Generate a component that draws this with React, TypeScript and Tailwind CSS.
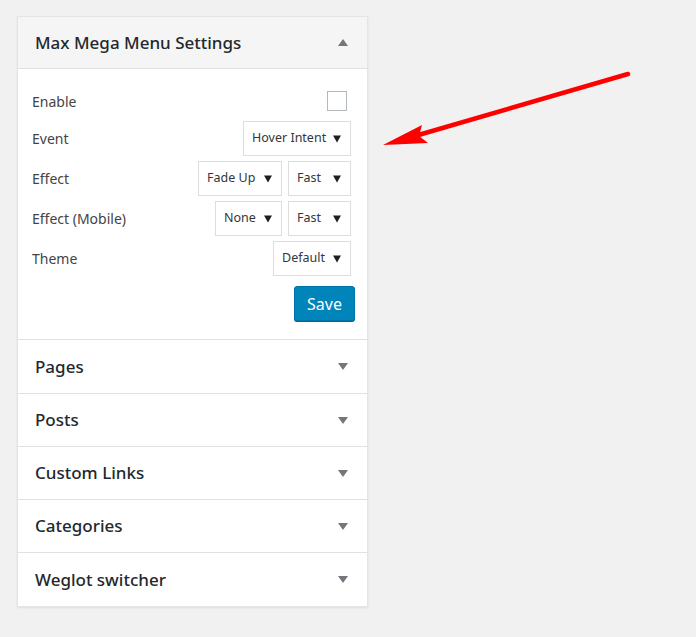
import React from "react";

const SECTIONS = ["Pages", "Posts", "Custom Links", "Categories", "Weglot switcher"];

function Caret({ up }: { up?: boolean }) {
  return (
    <svg width="10" height="7" viewBox="0 0 10 7" className="shrink-0">
      {up ? <polygon points="0,7 10,7 5,0" fill="#72777c" /> : <polygon points="0,0 10,0 5,7" fill="#72777c" />}
    </svg>
  );
}

function Select({ value, w }: { value: string; w: string }) {
  return (
    <div className={`h-[35px] ${w} shrink-0 flex items-center justify-between pl-[8px] pr-[9px] bg-white border border-[#dddddd] text-[12.5px] text-[#32373c] whitespace-nowrap`}>
      <span>{value}</span>
      <svg width="8" height="8" viewBox="0 0 8 8" className="ml-[4px] shrink-0">
        <polygon points="0,0.5 8,0.5 4,7.5" fill="#1e1e1e" />
      </svg>
    </div>
  );
}

function Row({ label, children, h = "h-[35px]" }: { label: string; children: React.ReactNode; h?: string }) {
  return (
    <div className={`flex items-center justify-between ${h}`}>
      <span className="text-[14px] text-[#444444]">{label}</span>
      <div className="flex items-center gap-[6px]">{children}</div>
    </div>
  );
}

export default function App() {
  return (
    <div className="relative min-h-[637px] w-[696px] bg-[#f1f1f1] pt-[16px] pl-[17px]" style={{ fontFamily: '"Noto Sans", "Open Sans", sans-serif' }}>
      <div className="w-[351px] bg-white border border-[#e5e5e5] shadow-[0_1px_2px_rgba(0,0,0,0.08)]">
        <div className="h-[52px] flex items-center justify-between pl-[17px] pr-[19px] bg-[#f5f5f5] border-b border-[#e1e1e1]">
          <span className="text-[17px] font-medium text-[#23282d]">Max Mega Menu Settings</span>
          <Caret up />
        </div>
        <div className="pt-[17px] pb-[18px] pl-[14px] pr-[16px] flex flex-col gap-[5px]">
          <Row label="Enable" h="h-[30px]">
            <div className="w-[20px] h-[20px] mr-[4px] border border-[#b4b9be] bg-white" />
          </Row>
          <Row label="Event">
            <Select value="Hover Intent" w="w-[108px]" />
          </Row>
          <Row label="Effect">
            <Select value="Fade Up" w="w-[84px]" />
            <Select value="Fast" w="w-[63px]" />
          </Row>
          <Row label="Effect (Mobile)">
            <Select value="None" w="w-[67px]" />
            <Select value="Fast" w="w-[63px]" />
          </Row>
          <Row label="Theme">
            <Select value="Default" w="w-[78px]" />
          </Row>
          <div className="flex justify-end mt-[5px] -mr-[4px]">
            <button className="h-[35px] w-[61px] rounded-[3px] bg-[#0085ba] border border-[#0073aa] shadow-[0_1px_0_#006799] text-white text-[16px]">
              Save
            </button>
          </div>
        </div>
        {SECTIONS.map((s, i) => (
          <div key={s} className={`${i === 0 || i === 4 ? "h-[54px]" : "h-[53px]"} flex items-center justify-between pl-[17px] pr-[19px] border-t border-[#e1e1e1]`}>
            <span className="text-[17px] font-medium text-[#23282d]">{s}</span>
            <Caret />
          </div>
        ))}
      </div>
      <svg className="absolute left-0 top-0" width="696" height="637" viewBox="0 0 696 637">
        <line x1="628" y1="74" x2="415" y2="136" stroke="#ff0000" strokeWidth="4.5" strokeLinecap="round" />
        <polygon points="383,145 422,125 419,136 428,143" fill="#ff0000" />
      </svg>
    </div>
  );
}
